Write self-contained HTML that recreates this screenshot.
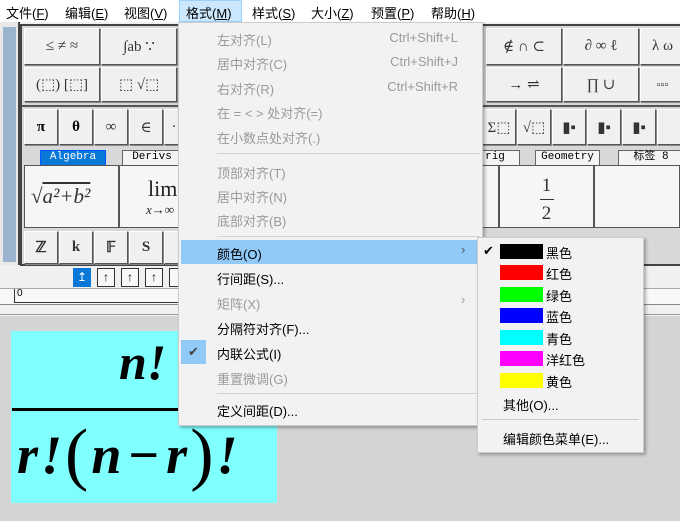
<!DOCTYPE html>
<html><head><meta charset="utf-8"><style>
*{margin:0;padding:0;box-sizing:border-box}
body{width:680px;height:521px;overflow:hidden;background:#f0f0f0;position:relative;font-family:"Liberation Sans","Noto Sans CJK SC",sans-serif;font-size:13px;color:#000}
.a{position:absolute}
.mb span{position:absolute;top:3px;font-size:13px}
.btn{position:absolute;background:#f0f0f0;border:1px solid #fff;border-right-color:#555;border-bottom-color:#555;box-shadow:1px 1px 0 #888;display:flex;align-items:center;justify-content:center;font-family:"Liberation Serif","DejaVu Serif",serif;font-size:15px;color:#333}
.tab{position:absolute;top:150px;height:15px;border:1px solid #666;border-bottom:none;background:#f4f4f4;font-family:"Liberation Mono","Noto Sans CJK SC",monospace;font-size:11px;text-align:center;line-height:13px}
.tpl{position:absolute;top:165px;height:63px;background:#f6f6f6;border:1px solid #555}
.menu{position:absolute;background:#f2f2f2;border:1px solid #ccc;box-shadow:2px 2px 3px rgba(0,0,0,.3)}
.mi{position:absolute;left:38px;font-size:13px;white-space:nowrap}
.dis{color:#9a9a9a}
.sc{position:absolute;right:24px;font-size:13px;color:#9a9a9a}
.sep{position:absolute;left:38px;right:2px;height:1px;background:#d4d4d4}
.sw{position:absolute;left:22px;width:43px;height:15px}
.cl{position:absolute;left:68px;font-size:13px}
</style></head><body>
<div class="a mb" style="left:0;top:0;width:680px;height:22px;background:#fff">
<span style="left:6px">文件(<u>F</u>)</span><span style="left:65px">编辑(<u>E</u>)</span><span style="left:124px">视图(<u>V</u>)</span>
<div class="a" style="left:179px;top:0;width:63px;height:22px;background:#cce8ff;border:1px solid #99d1ff"></div>
<span style="left:186px">格式(<u>M</u>)</span><span style="left:252px">样式(<u>S</u>)</span><span style="left:311px">大小(<u>Z</u>)</span><span style="left:371px">预置(<u>P</u>)</span><span style="left:431px">帮助(<u>H</u>)</span>
</div>
<div class="a" style="left:0;top:22px;width:20px;height:243px;background:#e8e8e8;border-right:2px solid #444"></div>
<div class="a" style="left:3px;top:27px;width:13px;height:235px;background:#9ab3cf"></div>
<div class="a" style="left:20px;top:24px;width:660px;height:242px;background:#d8d8d8;border-top:2px solid #444;border-left:2px solid #444;border-bottom:2px solid #444"></div>
<div class="btn" style="left:24px;top:28px;width:76px;height:37px">≤ ≠ ≈</div>
<div class="btn" style="left:101px;top:28px;width:76px;height:37px">∫ab ∵</div>
<div class="btn" style="left:24px;top:67px;width:76px;height:35px">(⬚) [⬚]</div>
<div class="btn" style="left:101px;top:67px;width:76px;height:35px">⬚ √⬚</div>
<div class="btn" style="left:486px;top:28px;width:76px;height:37px">∉ ∩ ⊂</div>
<div class="btn" style="left:563px;top:28px;width:76px;height:37px">∂ ∞ ℓ</div>
<div class="btn" style="left:640px;top:28px;width:45px;height:37px">λ ω</div>
<div class="btn" style="left:486px;top:67px;width:76px;height:35px">→ ⇌</div>
<div class="btn" style="left:563px;top:67px;width:76px;height:35px">∏ ∪</div>
<div class="btn" style="left:640px;top:67px;width:45px;height:35px;font-size:11px">▫▫▫</div>
<div class="a" style="left:22px;top:105px;width:658px;height:2px;background:#555"></div>
<div class="btn" style="left:24px;top:109px;width:34px;height:36px;font-weight:bold;color:#000">π</div>
<div class="btn" style="left:59px;top:109px;width:34px;height:36px;font-weight:bold;color:#000">θ</div>
<div class="btn" style="left:94px;top:109px;width:34px;height:36px">∞</div>
<div class="btn" style="left:129px;top:109px;width:34px;height:36px">∈</div>
<div class="btn" style="left:164px;top:109px;width:20px;height:36px">·</div>
<div class="btn" style="left:482px;top:109px;width:34px;height:36px">Σ⬚</div>
<div class="btn" style="left:517px;top:109px;width:34px;height:36px">√⬚</div>
<div class="btn" style="left:552px;top:109px;width:34px;height:36px">▮▪</div>
<div class="btn" style="left:587px;top:109px;width:34px;height:36px">▮▪</div>
<div class="btn" style="left:622px;top:109px;width:34px;height:36px">▮▪</div>
<div class="btn" style="left:657px;top:109px;width:30px;height:36px"></div>
<div class="tab" style="left:40px;width:66px;background:#0a78d7;color:#fff;border-color:#05f">Algebra</div>
<div class="tab" style="left:122px;width:60px">Derivs</div>
<div class="tab" style="left:470px;width:50px">rig</div>
<div class="tab" style="left:535px;width:65px">Geometry</div>
<div class="tab" style="left:618px;width:66px">标签 8</div>
<div class="tpl" style="left:24px;width:95px;font-family:'Liberation Serif',serif;font-size:21px;font-style:italic;padding:18px 0 0 6px;color:#333">√<span style="text-decoration:overline">a²+b²</span></div>
<div class="tpl" style="left:119px;width:70px;font-family:'Liberation Serif',serif;font-size:22px;padding:10px 0 0 28px;color:#222">lim<div style="font-size:13px;font-style:italic;margin-left:-2px">x→∞</div></div>
<div class="tpl" style="left:460px;width:39px"></div>
<div class="tpl" style="left:499px;width:95px;text-align:center;font-family:'Liberation Serif',serif;font-size:19px;padding-top:8px;line-height:24px;color:#333">1<div style="width:14px;height:1px;background:#333;margin:1px auto 2px"></div>2</div>
<div class="tpl" style="left:594px;width:86px"></div>
<div class="btn" style="left:24px;top:231px;width:34px;height:33px;font-weight:bold">ℤ</div>
<div class="btn" style="left:59px;top:231px;width:34px;height:33px;font-weight:bold">k</div>
<div class="btn" style="left:94px;top:231px;width:34px;height:33px;font-weight:bold">𝔽</div>
<div class="btn" style="left:129px;top:231px;width:34px;height:33px;font-weight:bold">S</div>
<div class="btn" style="left:164px;top:231px;width:20px;height:33px"></div>
<div class="a" style="left:73px;top:268px;width:18px;height:19px;background:#0a78d7;color:#fff;text-align:center;font-size:12px;line-height:18px">↥</div>
<div class="a" style="left:97px;top:268px;width:18px;height:19px;border:1px solid #333;background:#f8f8f8;text-align:center;font-size:12px;line-height:17px">↑</div>
<div class="a" style="left:121px;top:268px;width:18px;height:19px;border:1px solid #333;background:#f8f8f8;text-align:center;font-size:12px;line-height:17px">↑</div>
<div class="a" style="left:145px;top:268px;width:18px;height:19px;border:1px solid #333;background:#f8f8f8;text-align:center;font-size:12px;line-height:17px">↑</div>
<div class="a" style="left:169px;top:268px;width:12px;height:19px;border:1px solid #333;border-right:none;background:#f8f8f8"></div>
<div class="a" style="left:0;top:288px;width:680px;height:17px;background:#f8f8f8;border-top:1px solid #aaa;border-bottom:1px solid #888"></div>
<div class="a" style="left:14px;top:289px;width:1px;height:14px;background:#333"></div>
<div class="a" style="left:17px;top:288px;font-size:10px">0</div>
<div class="a" style="left:14px;top:302px;width:170px;height:1px;background:#333"></div>
<div class="a" style="left:0;top:305px;width:680px;height:10px;background:#f0f0f0;border-bottom:1px solid #999"></div>
<div class="a" style="left:0;top:316px;width:680px;height:205px;background:#d4d4d4"></div>
<div class="a" style="left:11px;top:331px;width:266px;height:172px;background:#80ffff;font-family:'Liberation Serif',serif;font-weight:bold;font-style:italic">
<div class="a" style="left:108px;top:2px;font-size:50px">n!</div>
<div class="a" style="left:1px;top:77px;width:180px;height:3px;background:#000"></div>
<div class="a" style="left:6px;top:84px;font-size:54px;white-space:nowrap;letter-spacing:3px">r!<span style="font-style:normal;font-weight:normal;font-size:70px;vertical-align:-4px">(</span>n<span style="font-style:normal;margin:0 4px">−</span>r<span style="font-style:normal;font-weight:normal;font-size:70px;vertical-align:-4px">)</span>!</div>
</div>
<div class="menu" style="left:178px;top:22px;width:305px;height:404px">
<div class="mi dis" style="top:7px">左对齐(L)</div><div class="sc" style="top:7px">Ctrl+Shift+L</div>
<div class="mi dis" style="top:31px">居中对齐(C)</div><div class="sc" style="top:31px">Ctrl+Shift+J</div>
<div class="mi dis" style="top:56px">右对齐(R)</div><div class="sc" style="top:56px">Ctrl+Shift+R</div>
<div class="mi dis" style="top:80px">在 = &lt; &gt; 处对齐(=)</div>
<div class="mi dis" style="top:105px">在小数点处对齐(.)</div>
<div class="sep" style="top:130px"></div>
<div class="mi dis" style="top:140px">顶部对齐(T)</div>
<div class="mi dis" style="top:164px">居中对齐(N)</div>
<div class="mi dis" style="top:188px">底部对齐(B)</div>
<div class="sep" style="top:213px"></div>
<div class="a" style="left:2px;top:217px;width:298px;height:24px;background:#91c9f7"></div>
<div class="mi" style="top:221px">颜色(O)</div><div class="a" style="left:282px;top:219px;color:#555">›</div>
<div class="mi" style="top:246px">行间距(S)...</div>
<div class="mi dis" style="top:271px">矩阵(X)</div><div class="a dis" style="left:282px;top:269px">›</div>
<div class="mi" style="top:296px">分隔符对齐(F)...</div>
<div class="a" style="left:2px;top:317px;width:25px;height:24px;background:#91c9f7;color:#444;text-align:center;line-height:24px">✔</div>
<div class="mi" style="top:321px">内联公式(I)</div>
<div class="mi dis" style="top:346px">重置微调(G)</div>
<div class="sep" style="top:370px"></div>
<div class="mi" style="top:378px">定义间距(D)...</div>
</div>
<div class="menu" style="left:477px;top:237px;width:167px;height:216px">
<div class="a" style="left:5px;top:5px">✔</div>
<div class="sw" style="top:6px;background:#000"></div><div class="cl" style="top:5px">黑色</div>
<div class="sw" style="top:27px;background:#f00"></div><div class="cl" style="top:26px">红色</div>
<div class="sw" style="top:49px;background:#0f0"></div><div class="cl" style="top:48px">绿色</div>
<div class="sw" style="top:70px;background:#00f"></div><div class="cl" style="top:69px">蓝色</div>
<div class="sw" style="top:92px;background:#0ff"></div><div class="cl" style="top:91px">青色</div>
<div class="sw" style="top:113px;background:#f0f"></div><div class="cl" style="top:112px">洋红色</div>
<div class="sw" style="top:135px;background:#ff0"></div><div class="cl" style="top:134px">黄色</div>
<div class="a" style="left:25px;top:157px">其他(O)...</div>
<div class="a" style="left:4px;right:4px;top:181px;height:1px;background:#ccc"></div>
<div class="a" style="left:25px;top:191px">编辑颜色菜单(E)...</div>
</div>
</body></html>
